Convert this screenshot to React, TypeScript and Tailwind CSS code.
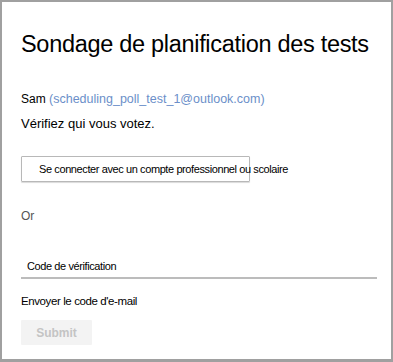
const App = () => {
	return (
		<div className="h-[362px] w-[393px] border-2 border-b-[3px] border-[#a0a0a0] bg-white font-['Liberation_Sans',Arial,sans-serif] text-black">
			<div className="pl-[19px] pr-[14px] pt-[27px]">
				<h1 className="whitespace-nowrap text-[23.5px] leading-[30px] tracking-[-0.3px]">
					Sondage de planification des tests
				</h1>

				{/* Voter */}
				<p className="mt-[32px] whitespace-nowrap text-[12px] leading-[16px]">
					Sam{" "}
					<span className="text-[12.5px] text-[#6b8fc9]">
						(scheduling_poll_test_1@outlook.com)
					</span>
				</p>
				<p className="mt-[8px] text-[13px] leading-[18px]">
					Vérifiez qui vous votez.
				</p>

				{/* Sign in */}
				<button
					type="button"
					className="mt-[23px] flex h-[26px] w-[229px] items-center whitespace-nowrap rounded-[1px] border border-[#b8b8b8] pl-[17px] text-left text-[11px] tracking-[-0.4px] shadow-[0_1px_1px_rgba(0,0,0,0.15)]"
				>
					Se connecter avec un compte professionnel ou scolaire
				</button>

				<p className="mt-[26px] text-[12px] leading-[16px] text-[#555]">Or</p>

				{/* Code */}
				<div className="mt-[34px] border-b-2 border-[#bcbcbc] pb-[3px] pl-[6px] text-[11px] leading-[16px] tracking-[-0.4px]">
					Code de vérification
				</div>

				<p className="mt-[14px] text-[11.5px] leading-[16px] tracking-[-0.4px]">
					Envoyer le code d'e-mail
				</p>

				<button
					type="button"
					disabled
					className="mt-[11px] h-[25px] w-[71px] rounded-[1px] bg-[#f3f3f3] text-[12px] font-bold text-[#c4c4c4]"
				>
					Submit
				</button>
			</div>
		</div>
	);
};

export default App;
